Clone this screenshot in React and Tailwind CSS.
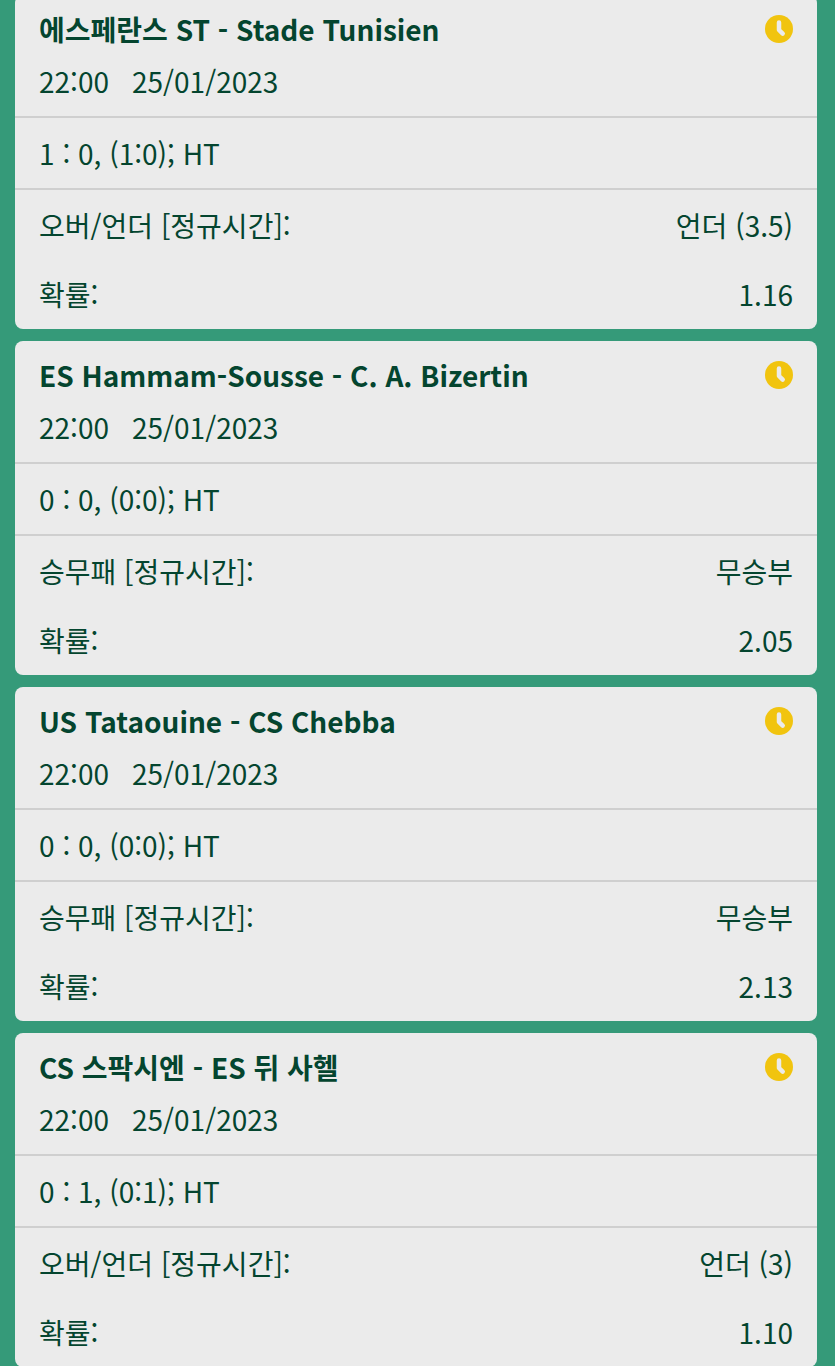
import React from 'react';

const BETS = [
    { id: 1, match: '에스페란스 ST - Stade Tunisien', time: '22:00', date: '25/01/2023', score: '1 : 0, (1:0); HT', market: '오버/언더 [정규시간]:', pick: '언더 (3.5)', odds: '1.16' },
    { id: 2, match: 'ES Hammam-Sousse - C. A. Bizertin', time: '22:00', date: '25/01/2023', score: '0 : 0, (0:0); HT', market: '승무패 [정규시간]:', pick: '무승부', odds: '2.05' },
    { id: 3, match: 'US Tataouine - CS Chebba', time: '22:00', date: '25/01/2023', score: '0 : 0, (0:0); HT', market: '승무패 [정규시간]:', pick: '무승부', odds: '2.13' },
    { id: 4, match: 'CS 스팍시엔 - ES 뒤 사헬', time: '22:00', date: '25/01/2023', score: '0 : 1, (0:1); HT', market: '오버/언더 [정규시간]:', pick: '언더 (3)', odds: '1.10' },
];

const PendingIcon = () => (
    <svg viewBox="0 0 28 28" className="w-7 h-7 shrink-0" role="img" aria-label="대기중">
        <circle cx="14" cy="14" r="14" fill="#f1c40f" />
        <path d="M14 7.5v7.5l3.7 3.7" fill="none" stroke="#ebebeb" strokeWidth="4.5" strokeLinecap="round" strokeLinejoin="round" />
    </svg>
);

const BetCard = ({ bet }) => (
    <article className="rounded-lg bg-[#ebebeb]">
        {/* Match + kick-off */}
        <header className="px-6 pt-2 pb-[9px] border-b-2 border-[#cfcfcf]">
            <div className="flex items-center justify-between h-13">
                <h2 className="font-bold">{bet.match}</h2>
                <PendingIcon />
            </div>
            <div className="flex items-center gap-[23px] h-13">
                <span>{bet.time}</span>
                <span>{bet.date}</span>
            </div>
        </header>

        <p className="flex items-center px-6 pb-px h-18 border-b-2 border-[#cfcfcf]">{bet.score}</p>

        {/* Selection */}
        <dl className="px-6">
            <div className="flex items-center justify-between h-[69px]">
                <dt>{bet.market}</dt>
                <dd>{bet.pick}</dd>
            </div>
            <div className="flex items-center justify-between h-[70px]">
                <dt>확률:</dt>
                <dd>{bet.odds}</dd>
            </div>
        </dl>
    </article>
);

const App = () => (
    <main lang="ko" className="min-h-screen overflow-hidden bg-[#359a79] pl-[15px] pr-[18px] text-[28px] leading-10 text-[#04452f] font-['Noto_Sans_CJK_KR',sans-serif]">
        <div className="-mt-[5px] pb-3 flex flex-col gap-3">
            {BETS.map((bet) => (
                <BetCard key={bet.id} bet={bet} />
            ))}
        </div>
    </main>
);

export default App;
